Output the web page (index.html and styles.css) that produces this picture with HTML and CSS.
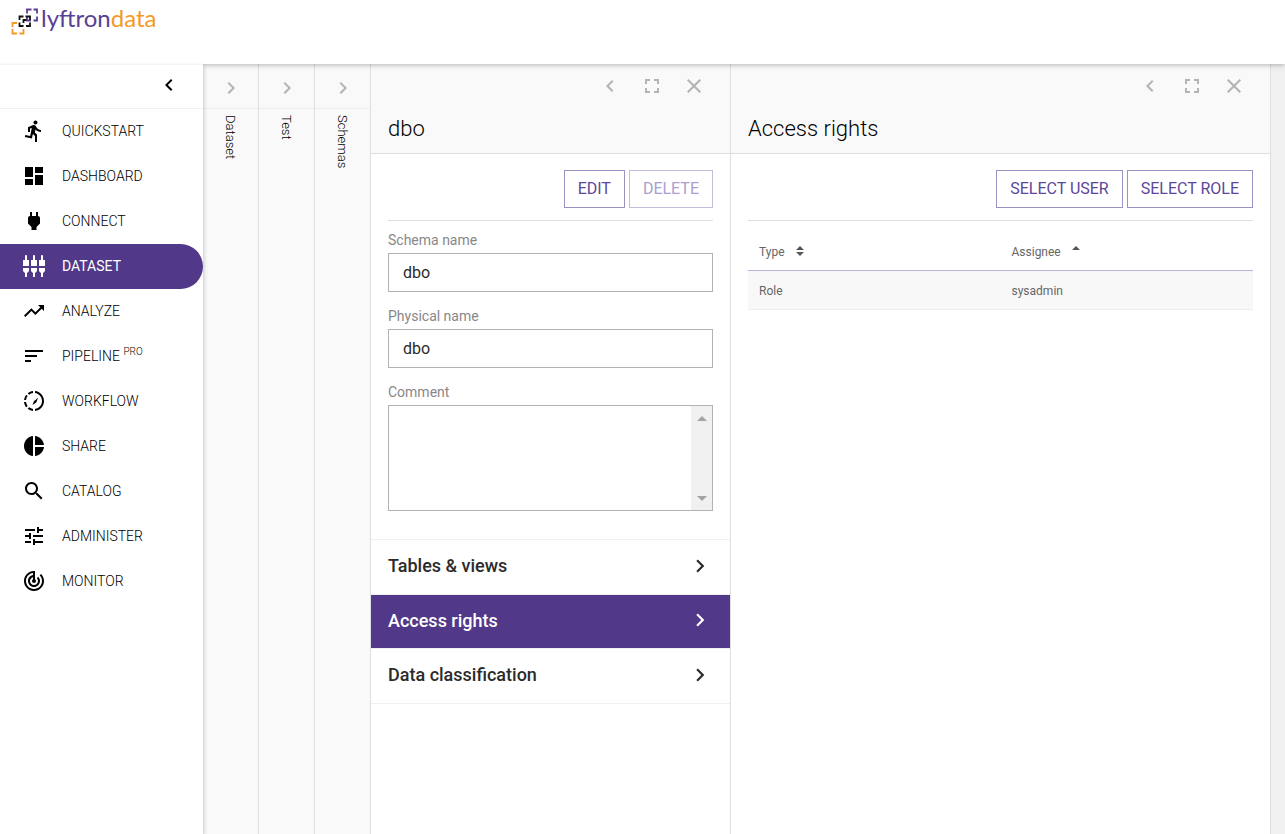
FILE: index.html
```html
<!DOCTYPE html>
<html lang="en">
<head>
<meta charset="UTF-8" />
<meta name="viewport" content="width=device-width, initial-scale=1" />
<title>Lyftrondata - Access rights</title>
<link rel="stylesheet" href="styles.css">
</head>
<body>

<!-- shared icons -->
<svg class="sprite" aria-hidden="true">
    <symbol id="left" viewBox="0 0 24 24"><path d="M15.41 7.41L14 6l-6 6 6 6 1.41-1.41L10.83 12z"/></symbol>
    <symbol id="right" viewBox="0 0 24 24"><path d="M10 6L8.59 7.41 13.17 12l-4.58 4.59L10 18l6-6z"/></symbol>
    <symbol id="full" viewBox="0 0 24 24"><path d="M7 14H5v5h5v-2H7v-3zm-2-4h2V7h3V5H5v5zm12 7h-3v2h5v-5h-2v3zM14 5v2h3v3h2V5h-5z"/></symbol>
    <symbol id="close" viewBox="0 0 24 24"><path d="M19 6.41L17.59 5 12 10.59 6.41 5 5 6.41 10.59 12 5 17.59 6.41 19 12 13.41 17.59 19 19 17.59 13.41 12z"/></symbol>
</svg>

<header class="topbar">
    <a class="logo" href="#">
        <svg width="28" height="27" viewBox="0 0 28 27" fill="none" stroke-width="1.8">
            <path stroke="#f39a26" d="M1.500 19v-4h4.500M1.500 21v4.500H6M8.500 25.500h4V21"/>
            <path stroke="#5a3f94" d="M16 5.500V1.500h4.500M22.500 1.500H26v4M16 8v4.500h4M22.500 12.500H26V8.500"/>
            <path stroke="#111" d="M8.500 12V8.500h4M14.500 8.500h4.500v3.500M8.500 14.500v3.500h4M15 18h4v-3.500M12.500 15V12h3"/>
        </svg>
        <span class="logo-text">lyftron<span class="logo-data">data</span></span>
    </a>
</header>

<div class="layout">
    <nav class="sidebar">
        <div class="sidebar-top">
            <button class="icon-btn dark" aria-label="Collapse menu"><svg><use href="#left"/></svg></button>
        </div>
        <a class="nav-item" href="#"><svg viewBox="0 0 24 24"><path d="M13.49 5.48c1.1 0 2-.9 2-2s-.9-2-2-2-2 .9-2 2 .9 2 2 2zm-3.6 13.9l1-4.4 2.1 2v6h2v-7.5l-2.1-2 .6-3c1.3 1.5 3.3 2.5 5.5 2.5v-2c-1.900 0-3.500-1-4.300-2.400l-1-1.600c-.4-.6-1-1-1.700-1-.3 0-.5.1-.8.1l-5.200 2.200v4.700h2v-3.400l1.800-.7-1.600 8.100-4.900-1-.4 2 7 1.400z"/></svg>QUICKSTART</a>
        <a class="nav-item" href="#"><svg viewBox="0 0 24 24"><path d="M3 13h8V3H3v10zm0 8h8v-6H3v6zm10 0h8V11h-8v10zm0-18v6h8V3h-8z"/></svg>DASHBOARD</a>
        <a class="nav-item" href="#"><svg viewBox="0 0 24 24"><path d="M16.010 7L16 3h-2v4h-4V3H8v4h-.010C7 6.990 6 7.990 6 8.990v5.490L9.500 18v3h5v-3l3.500-3.510v-5.500c0-1-1-2-1.990-1.990z"/></svg>CONNECT</a>
        <a class="nav-item active" href="#"><svg viewBox="0 0 24 24"><path d="M5 2c0-.55-.45-1-1-1s-1 .45-1 1v4H1v6h6V6H5V2zm4 14c0 1.300.84 2.400 2 2.820V23h2v-4.180c1.160-.41 2-1.510 2-2.820v-2H9v2zm-8 0c0 1.300.84 2.400 2 2.820V23h2v-4.180C6.160 18.400 7 17.300 7 16v-2H1v2zM21 6V2c0-.55-.45-1-1-1s-1 .45-1 1v4h-2v6h6V6h-2zm-8-4c0-.55-.45-1-1-1s-1 .45-1 1v4H9v6h6V6h-2V2zm4 14c0 1.300.84 2.400 2 2.820V23h2v-4.180c1.160-.41 2-1.510 2-2.820v-2h-6v2z"/></svg>DATASET</a>
        <a class="nav-item" href="#"><svg viewBox="0 0 24 24"><path d="M16 6l2.290 2.290-4.880 4.880-4-4L2 16.590 3.410 18l6-6 4 4 6.300-6.290L22 12V6z"/></svg>ANALYZE</a>
        <a class="nav-item" href="#"><svg viewBox="0 0 24 24"><path d="M3 18h6v-2H3v2zM3 6v2h18V6H3zm0 7h12v-2H3v2z"/></svg><span>PIPELINE <sup>PRO</sup></span></a>
        <a class="nav-item" href="#"><svg viewBox="0 0 24 24"><path d="M13.020 2.050v2C16.970 4.550 20 7.920 20 12s-3.050 7.440-6.980 7.930v2C18.060 21.430 22 17.180 22 12s-3.940-9.430-8.980-9.950zM4.030 11c.15-1.450.71-2.790 1.600-3.900L4.200 5.680A9.900 9.900 0 0 0 2.030 11h2zm1.600 5.900A7.900 7.900 0 0 1 4.030 13h-2c.18 1.990.95 3.840 2.170 5.320l1.430-1.420zM11 4.070V2.050c-2.010.2-3.840 1-5.320 2.210L7.100 5.690A7.940 7.940 0 0 1 11 4.070zM5.680 19.740A9.980 9.980 0 0 0 11 21.950v-2.020a7.940 7.940 0 0 1-3.900-1.620l-1.420 1.430zM16 8.500l-1.500 4.500-1 1-3 2 1.500-4 1.500-1z"/></svg>WORKFLOW</a>
        <a class="nav-item" href="#"><svg viewBox="0 0 24 24"><path d="M11 2v20c-5.070-.5-9-4.790-9-10s3.930-9.500 9-10zm2.030 0v8.990H22c-.47-4.740-4.240-8.520-8.970-8.990zm0 11.010V22c4.740-.47 8.500-4.250 8.970-8.990h-8.970z"/></svg>SHARE</a>
        <a class="nav-item" href="#"><svg viewBox="0 0 24 24"><path d="M15.500 14h-.79l-.28-.27C15.410 12.590 16 11.110 16 9.500 16 5.910 13.090 3 9.500 3S3 5.910 3 9.500 5.910 16 9.500 16c1.610 0 3.090-.59 4.230-1.570l.27.28v.79l5 4.990L20.490 19l-4.990-5zm-6 0C7.010 14 5 11.990 5 9.500S7.010 5 9.500 5 14 7.010 14 9.500 11.990 14 9.500 14z"/></svg>CATALOG</a>
        <a class="nav-item" href="#"><svg viewBox="0 0 24 24"><path d="M3 17v2h6v-2H3zM3 5v2h10V5H3zm10 16v-2h8v-2h-8v-2h-2v6h2zM7 9v2H3v2h4v2h2V9H7zm14 4v-2H11v2h10zm-6-4h2V7h4V5h-4V3h-2v6z"/></svg>ADMINISTER</a>
        <a class="nav-item" href="#"><svg viewBox="0 0 24 24"><path d="M19.070 4.930l-1.410 1.410C19.100 7.790 20 9.790 20 12c0 4.420-3.580 8-8 8s-8-3.580-8-8c0-4.080 3.050-7.440 7-7.930v2.020C8.160 6.570 6 9.030 6 12c0 3.310 2.690 6 6 6s6-2.690 6-6c0-1.660-.67-3.160-1.760-4.240l-1.410 1.410C15.550 9.900 16 10.900 16 12c0 2.210-1.790 4-4 4s-4-1.790-4-4c0-1.860 1.280-3.410 3-3.860v2.140c-.6.350-1 .98-1 1.720 0 1.100.9 2 2 2s2-.9 2-2c0-.74-.4-1.380-1-1.720V2h-1C6.480 2 2 6.480 2 12s4.480 10 10 10 10-4.480 10-10c0-2.760-1.120-5.260-2.930-7.070z"/></svg>MONITOR</a>
    </nav>

    <section class="strip">
        <button class="icon-btn strip-btn" aria-label="Expand Dataset"><svg><use href="#right"/></svg></button>
        <span class="strip-title">Dataset</span>
    </section>
    <section class="strip">
        <button class="icon-btn strip-btn" aria-label="Expand Test"><svg><use href="#right"/></svg></button>
        <span class="strip-title">Test</span>
    </section>
    <section class="strip">
        <button class="icon-btn strip-btn" aria-label="Expand Schemas"><svg><use href="#right"/></svg></button>
        <span class="strip-title">Schemas</span>
    </section>

    <section class="panel schema-panel">
        <div class="panel-head">
            <div class="panel-tools">
                <button class="icon-btn" aria-label="Collapse"><svg><use href="#left"/></svg></button>
                <button class="icon-btn" aria-label="Full screen"><svg><use href="#full"/></svg></button>
                <button class="icon-btn" aria-label="Close"><svg><use href="#close"/></svg></button>
            </div>
            <h2>dbo</h2>
        </div>
        <div class="panel-body">
            <div class="actions">
                <button class="btn">EDIT</button>
                <button class="btn" disabled>DELETE</button>
            </div>
            <form class="form">
                <label for="schema-name">Schema name</label>
                <input id="schema-name" type="text" value="dbo" readonly>
                <label for="physical-name">Physical name</label>
                <input id="physical-name" type="text" value="dbo" readonly>
                <label for="comment">Comment</label>
                <div class="comment-box">
                    <textarea id="comment" readonly></textarea>
                    <div class="scrollbar">
                        <svg width="10" height="5"><path d="M0 5L5 0l5 5z"/></svg>
                        <svg width="10" height="5"><path d="M0 0l5 5 5-5z"/></svg>
                    </div>
                </div>
            </form>
        </div>
        <div class="links">
            <a href="#">Tables &amp; views<svg><use href="#right"/></svg></a>
            <a href="#" class="active">Access rights<svg><use href="#right"/></svg></a>
            <a href="#">Data classification<svg><use href="#right"/></svg></a>
        </div>
    </section>

    <section class="panel rights-panel">
        <div class="panel-head">
            <div class="panel-tools">
                <button class="icon-btn" aria-label="Collapse"><svg><use href="#left"/></svg></button>
                <button class="icon-btn" aria-label="Full screen"><svg><use href="#full"/></svg></button>
                <button class="icon-btn" aria-label="Close"><svg><use href="#close"/></svg></button>
            </div>
            <h2>Access rights</h2>
        </div>
        <div class="panel-body">
            <div class="actions">
                <button class="btn">SELECT USER</button>
                <button class="btn">SELECT ROLE</button>
            </div>
            <table>
                <thead>
                    <tr>
                        <th>Type <svg class="sort" width="8" height="10"><path d="M0 4l4-4 4 4zM0 6l4 4 4-4z"/></svg></th>
                        <th>Assignee <svg class="sort" width="8" height="10"><path d="M0 4l4-4 4 4z"/></svg></th>
                    </tr>
                </thead>
                <tbody>
                    <tr>
                        <td>Role</td>
                        <td>sysadmin</td>
                    </tr>
                </tbody>
            </table>
        </div>
    </section>
</div>

</body>
</html>
```

FILE: styles.css
```css
* {
    box-sizing: border-box;
}
body {
    margin: 0;
    min-height: 100vh;
    display: flex;
    flex-direction: column;
    font-family: Roboto, sans-serif;
    background: #f0f0f0;
    color: #2b2b2b;
}
a {
    color: inherit;
    text-decoration: none;
}
button, input, textarea {
    font-family: inherit;
}
.sprite {
    display: none;
}

/* top bar */
.topbar {
    height: 64px;
    padding: 4px 11px;
    background: #fff;
    box-shadow: 0 1px 5px rgba(0, 0, 0, 0.28);
    position: relative;
    z-index: 1;
}
.logo {
    display: flex;
    align-items: flex-start;
    gap: 2px;
}
.logo svg {
    margin-top: 4px;
}
.logo-text {
    font-family: Lato, sans-serif;
    font-size: 24px;
    line-height: 28px;
    color: #5a3f94;
}
.logo-data {
    color: #f39a26;
}

.layout {
    flex: 1;
    display: flex;
}

/* sidebar */
.sidebar {
    flex: 0 0 203px;
    background: #fff;
    border-top: 1px solid #f3f3f3;
    box-shadow: 1px 2px 4px rgba(0, 0, 0, 0.2);
    position: relative;
    z-index: 2;
}
.sidebar-top {
    height: 44px;
    display: flex;
    align-items: center;
    justify-content: flex-end;
    padding: 0 22px 4px 0;
    border-bottom: 1px solid #f0f0f3;
}
.icon-btn {
    display: flex;
    padding: 0;
    border: none;
    background: none;
    color: #b3b3b3;
    cursor: pointer;
}
.icon-btn svg {
    width: 24px;
    height: 24px;
    fill: currentColor;
}
.icon-btn.dark {
    color: #000;
}
.nav-item {
    display: flex;
    align-items: center;
    gap: 16px;
    height: 45px;
    padding: 0 0 2px 22px;
    font-size: 14px;
    font-weight: 300;
    color: #000;
}
.nav-item svg {
    width: 24px;
    height: 24px;
    fill: currentColor;
}
.nav-item sup {
    font-size: 10px;
    line-height: 1px;
}
.nav-item.active {
    background: #513888;
    color: #fff;
    font-weight: 400;
    border-radius: 0 23px 23px 0;
}

/* collapsed panels */
.strip {
    flex: 0 0 56px;
    background: #f9f9f9;
    border-right: 1px solid #dedede;
}
.strip-btn {
    width: 100%;
    height: 45px;
    padding-top: 3px;
    justify-content: center;
    align-items: center;
    border-bottom: 1px solid #eee;
}
.strip-title {
    display: block;
    margin: 6px 0 0 19px;
    writing-mode: vertical-rl;
    font-size: 13px;
    line-height: 16px;
    font-weight: 300;
    color: #000;
}

/* open panels */
.panel {
    background: #fff;
    border-right: 1px solid #dedede;
}
.schema-panel {
    flex: 0 0 360px;
}
.rights-panel {
    flex: 1;
    margin-right: 14px;
}
.panel-head {
    height: 90px;
    padding: 10px 17px 0;
    background: #f9f9f9;
    border-bottom: 1px solid #dedede;
}
.panel-tools {
    display: flex;
    justify-content: flex-end;
    gap: 18px;
    padding-right: 7px;
}
h2 {
    margin: 18px 0 0;
    font-size: 22px;
    line-height: 26px;
    font-weight: 300;
    color: #000;
}
.panel-body {
    padding: 16px 17px 0;
}
.actions {
    display: flex;
    justify-content: flex-end;
    gap: 4px;
    padding-bottom: 12px;
    border-bottom: 1px solid #dedede;
}
.btn {
    height: 38px;
    padding: 0 13px 2px;
    background: #fff;
    border: 1px solid #9c90c4;
    color: #5c4799;
    font-size: 16px;
    cursor: pointer;
}
.btn:disabled {
    border-color: #c3bcdb;
    color: #a9a0cf;
}

/* schema form */
.form {
    display: flex;
    flex-direction: column;
    padding-top: 11px;
}
.form label {
    font-size: 14px;
    line-height: 16px;
    margin-bottom: 5px;
    color: #888;
}
.form input {
    height: 39px;
    margin-bottom: 16px;
    padding: 0 14px;
    border: 1px solid #b3b3b3;
    font-size: 16px;
    color: #2b2b2b;
}
.comment-box {
    display: flex;
    height: 106px;
    border: 1px solid #b3b3b3;
}
.comment-box textarea {
    flex: 1;
    min-width: 0;
    border: none;
    resize: none;
    font-size: 16px;
}
.scrollbar {
    width: 21px;
    padding: 10px 0 9px;
    display: flex;
    flex-direction: column;
    align-items: center;
    justify-content: space-between;
    background: #f0f0f0;
    fill: #a3a3a3;
}

/* section links */
.links {
    margin-top: 28px;
    border-top: 1px solid #f0f0f0;
}
.links a {
    display: flex;
    align-items: center;
    justify-content: space-between;
    height: 55px;
    padding: 0 17px 3px;
    border-bottom: 1px solid #f0f0f0;
    font-size: 18px;
    font-weight: 500;
}
.links svg {
    width: 26px;
    height: 26px;
    fill: currentColor;
}
.links a.active {
    height: 54px;
    background: #513888;
    color: #fff;
}

/* rights table */
table {
    width: 100%;
    margin-top: 12px;
    border-spacing: 0;
    table-layout: fixed;
    font-size: 12px;
    color: #666;
}
th, td {
    height: 38px;
    padding: 0 11px;
    text-align: left;
    font-weight: 400;
}
th {
    border-bottom: 1px solid #b9b1d6;
}
td {
    height: 39px;
    padding-top: 2px;
    background: #f8f8f8;
    border-bottom: 1px solid #eee;
}
.sort {
    margin-left: 8px;
    fill: #555;
}
```
